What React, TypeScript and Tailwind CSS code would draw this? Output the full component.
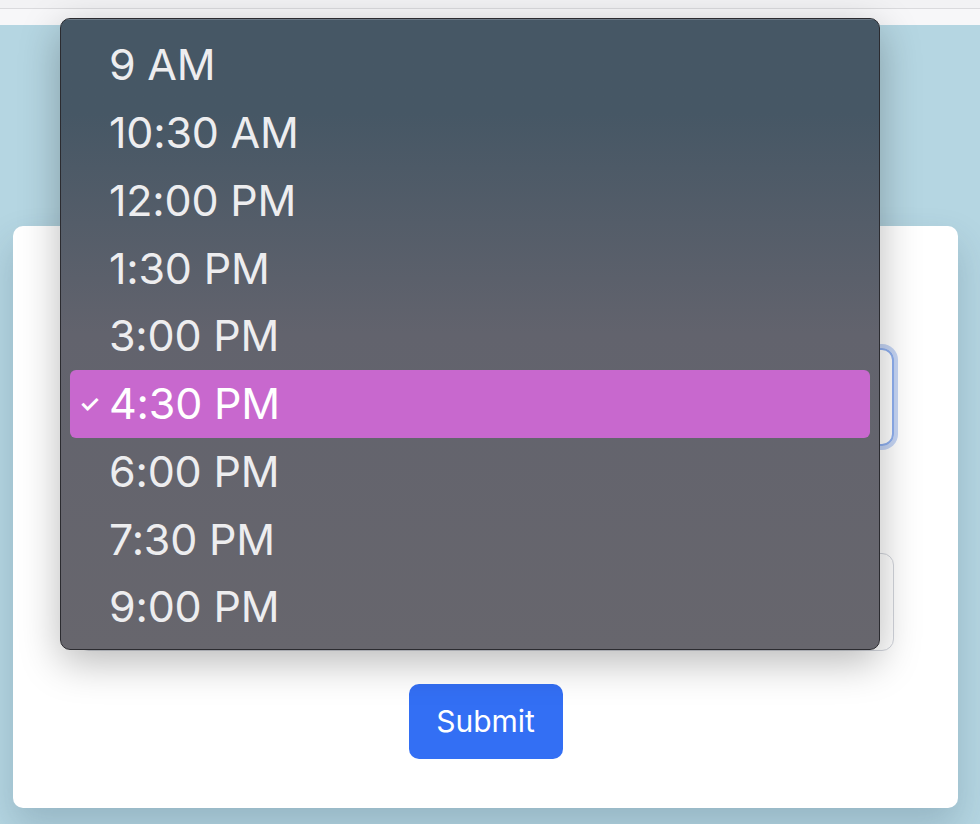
const times = [
  "9 AM",
  "10:30 AM",
  "12:00 PM",
  "1:30 PM",
  "3:00 PM",
  "4:30 PM",
  "6:00 PM",
  "7:30 PM",
  "9:00 PM",
];

const selected = "4:30 PM";

function TimeMenu() {
  return (
    <div className="absolute left-[60px] top-[18px] w-[820px] h-[632px] rounded-[10px] border border-[#2b2b30] bg-gradient-to-b from-[#465765] from-[15%] via-[#62636d] via-[50%] to-[#67666d] shadow-[0_12px_40px_rgba(0,0,0,0.28)] pt-[12px] overflow-hidden">
      <div className="absolute inset-x-0 top-0 h-px bg-[#6c7a87]" />
      {times.map((t) => {
        const isSel = t === selected;
        return (
          <div key={t} className="h-[67.75px] px-[9px]">
            <div
              className={
                isSel
                  ? "relative h-full flex items-center rounded-[6px] bg-[#c868ce] pl-[39px] text-white"
                  : "relative h-full flex items-center pl-[39px] text-[#ededef]"
              }
            >
              {isSel && (
                <span className="absolute left-[9px] top-[22px] text-[24px] font-semibold leading-none">✓</span>
              )}
              <span className="text-[43px] leading-none tracking-[-0.2px]">{t}</span>
            </div>
          </div>
        );
      })}
    </div>
  );
}

export default function App() {
  return (
    <div className="relative w-[980px] h-[824px] overflow-hidden bg-[#b5d6e2] font-['Inter',sans-serif]">
      <div className="h-[25px] bg-[#f7f7f9]">
        <div className="h-[8px] bg-[#f2f2f4]" />
        <div className="h-px bg-[#dadadd]" />
      </div>

      <div className="ml-[13px] mt-[201px] w-[945px] h-[582px] rounded-[10px] bg-white shadow-[0_18px_36px_rgba(40,70,90,0.22)] px-[64px] flex flex-col">
        <div className="h-[122px]" />
        <div className="h-[98px] rounded-[12px] border-2 border-[#8fb0f0] ring-4 ring-[#c6d6f6]" />
        <div className="h-[107px]" />
        <div className="h-[98px] rounded-[12px] border border-[#d2d5dc]" />
        <div className="flex justify-center mt-[33px]">
          <button className="w-[154px] h-[75px] rounded-[10px] bg-[#336ff4] text-white text-[30px]">
            Submit
          </button>
        </div>
      </div>

      <TimeMenu />
    </div>
  );
}
